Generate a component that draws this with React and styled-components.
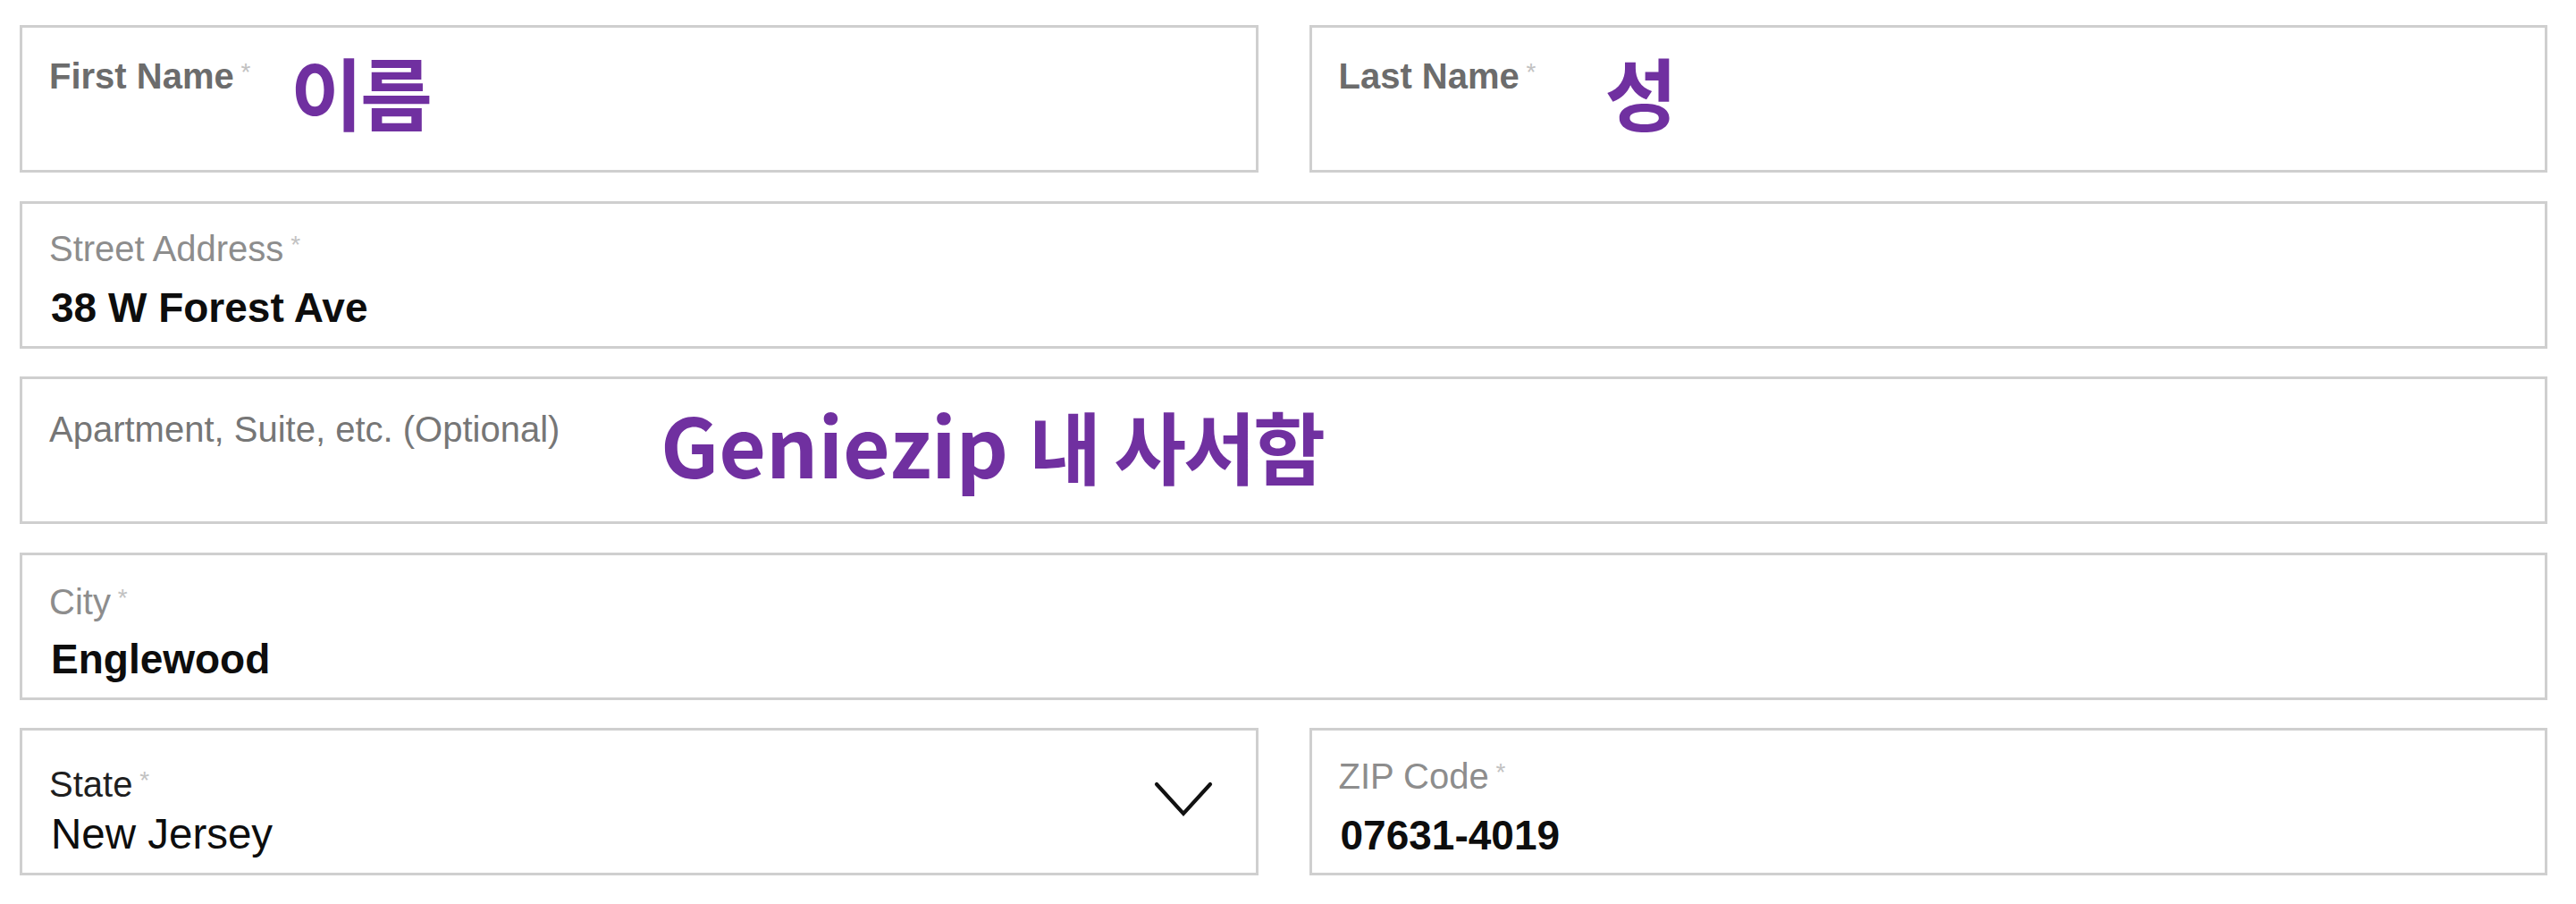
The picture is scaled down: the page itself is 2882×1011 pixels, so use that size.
import styled, { createGlobalStyle } from 'styled-components';

const GlobalStyle = createGlobalStyle`
  html, body {
    margin: 0;
    padding: 0;
    background: #ffffff;
  }
  body {
    font-family: "Liberation Sans", Arial, sans-serif;
  }
`;

const ChevronIcon = () => (
  <svg width="66" height="40" viewBox="0 0 66 40" fill="none">
    <polyline
      points="3,3 33,36 63,3"
      stroke="#111"
      strokeWidth="4.2"
      strokeLinecap="round"
      strokeLinejoin="miter"
    />
  </svg>
);

const App = () => {
  return (
    <Page>
      <GlobalStyle />
      <Form>
        <Field>
          <FieldBody $offset={34}>
            <Label $tone="strong">
              First Name<Required> *</Required>
            </Label>
          </FieldBody>
          <Note $left={300}>이름</Note>
        </Field>
        <Field>
          <FieldBody $offset={34}>
            <Label $tone="strong">
              Last Name<Required> *</Required>
            </Label>
          </FieldBody>
          <Note $left={328}>성</Note>
        </Field>

        <Field $wide>
          <FieldBody $offset={30}>
            <Label>
              Street Address<Required> *</Required>
            </Label>
            <Value>38 W Forest Ave</Value>
          </FieldBody>
        </Field>

        <Field $wide>
          <FieldBody $offset={36}>
            <Label $tone="medium">Apartment, Suite, etc. (Optional)</Label>
          </FieldBody>
          <Note $left={714}>
            <Latin>Geniezip</Latin> 내 사서함
          </Note>
        </Field>

        <Field $wide>
          <FieldBody $offset={32}>
            <Label>
              City<Required> *</Required>
            </Label>
            <Value>Englewood</Value>
          </FieldBody>
        </Field>

        <Field>
          <FieldBody $offset={40}>
            <Label $tone="dark">
              State<Required> *</Required>
            </Label>
            <Value $regular>New Jersey</Value>
          </FieldBody>
          <Chevron>
            <ChevronIcon />
          </Chevron>
        </Field>
        <Field>
          <FieldBody $offset={31}>
            <Label>
              ZIP Code<Required> *</Required>
            </Label>
            <Value>07631-4019</Value>
          </FieldBody>
        </Field>
      </Form>
    </Page>
  );
};

export default App;

const Page = styled.div`
  padding: 28px 32px 0 22px;
`;

const Form = styled.div`
  display: grid;
  grid-template-columns: 1fr 1fr;
  column-gap: 57px;
  row-gap: 31.5px;
  width: 2828px;
`;

const Field = styled.div`
  position: relative;
  grid-column: ${({ $wide }) => ($wide ? '1 / span 2' : 'auto')};
  display: flex;
  align-items: stretch;
  height: 165px;
  padding: 0 30px;
  box-sizing: border-box;
  border: 3px solid #cfcfcf;
  background: #ffffff;
`;

const FieldBody = styled.div`
  flex: 1;
  display: flex;
  flex-direction: column;
  padding-top: ${({ $offset }) => $offset}px;
  padding-bottom: 19.5px;
`;

const toneColor = {
  strong: '#6c6c6c',
  medium: '#767676',
  dark: '#1e1e1e',
  light: '#8d8d8d',
};

const Label = styled.div`
  font-size: 40px;
  line-height: 1;
  font-weight: ${({ $tone }) => ($tone === 'strong' ? 700 : 400)};
  color: ${({ $tone }) => toneColor[$tone] || toneColor.light};
  white-space: nowrap;
`;

const Required = styled.span`
  font-size: 28px;
  font-weight: 400;
  color: #c2c2c2;
  vertical-align: 9px;
`;

const Value = styled.div`
  margin-top: auto;
  font-size: ${({ $regular }) => ($regular ? 47.5 : 46)}px;
  line-height: 1;
  font-weight: ${({ $regular }) => ($regular ? 400 : 700)};
  color: #0d0d0d;
  white-space: nowrap;
  padding-left: 2px;
`;

const Note = styled.div`
  position: absolute;
  top: 26px;
  left: ${({ $left }) => $left}px;
  font-family: "Noto Sans CJK KR", "Liberation Sans", sans-serif;
  font-size: 88px;
  line-height: 1;
  font-weight: 700;
  letter-spacing: -3px;
  color: #7030a0;
  white-space: nowrap;
`;

const Latin = styled.span`
  font-size: 91px;
  letter-spacing: 0;
  margin-right: 6px;
`;

const Chevron = styled.div`
  align-self: center;
  display: flex;
  margin-right: 18px;
  margin-bottom: 6px;
`;
